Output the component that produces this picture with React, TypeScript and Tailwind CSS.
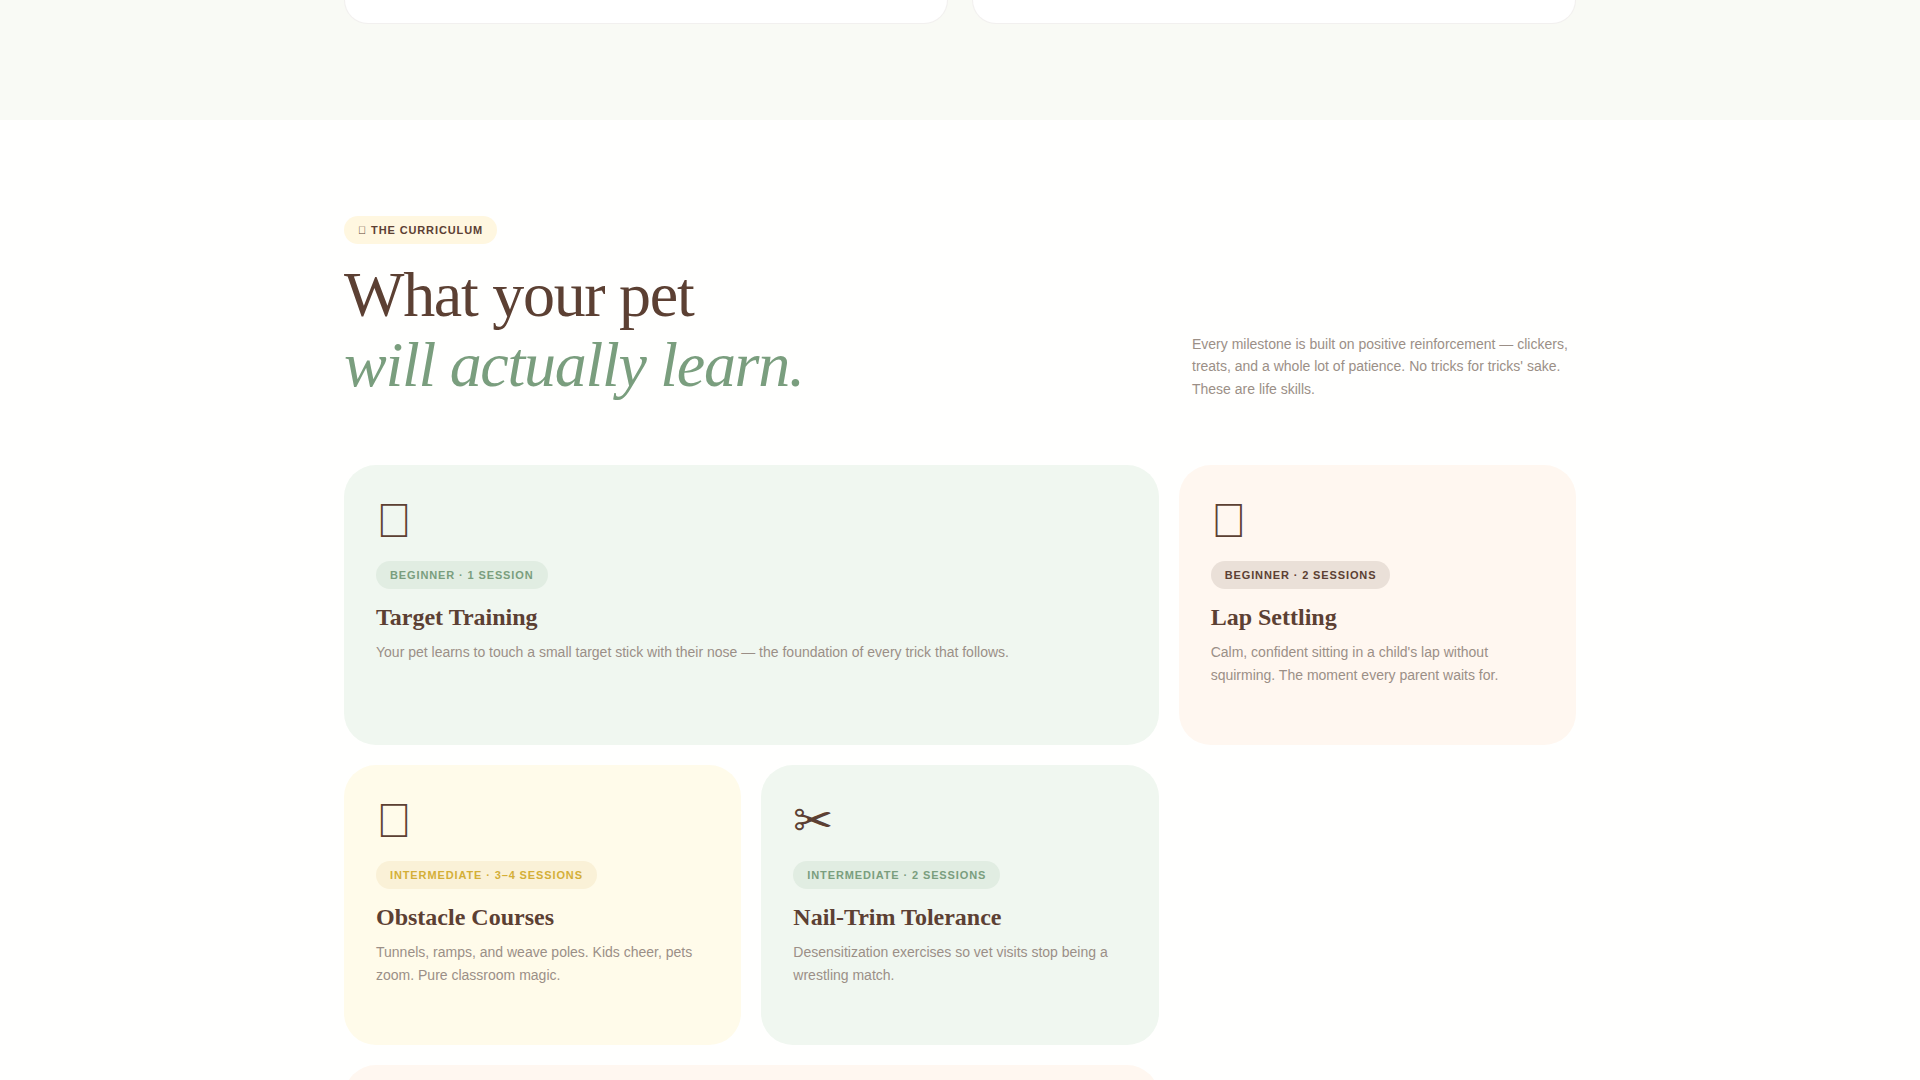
type Lesson = {
  icon: string;
  level: string;
  title: string;
  text: string;
  card: string;
  badge: string;
};

const GLYPH = '\uE000';

const lessons: Lesson[] = [
  {
    icon: GLYPH,
    level: 'Beginner · 1 session',
    title: 'Target Training',
    text: 'Your pet learns to touch a small target stick with their nose — the foundation of every trick that follows.',
    card: 'bg-[#f0f7f0] col-span-2',
    badge: 'bg-[#e1ede2] text-[#7a9e7e]',
  },
  {
    icon: GLYPH,
    level: 'Beginner · 2 sessions',
    title: 'Lap Settling',
    text: "Calm, confident sitting in a child's lap without squirming. The moment every parent waits for.",
    card: 'bg-[#fff7f0]',
    badge: 'bg-[#eae0d8] text-[#5c4033]',
  },
  {
    icon: GLYPH,
    level: 'Intermediate · 3–4 sessions',
    title: 'Obstacle Courses',
    text: 'Tunnels, ramps, and weave poles. Kids cheer, pets zoom. Pure classroom magic.',
    card: 'bg-[#fffbea]',
    badge: 'bg-[#faf1d7] text-[#d4af37]',
  },
  {
    icon: '✂',
    level: 'Intermediate · 2 sessions',
    title: 'Nail-Trim Tolerance',
    text: 'Desensitization exercises so vet visits stop being a wrestling match.',
    card: 'bg-[#f0f7f0]',
    badge: 'bg-[#e1ede2] text-[#7a9e7e]',
  },
];

const badgeBase =
  'inline-block rounded-full px-3.5 py-1.5 text-[11px] leading-4 font-bold uppercase tracking-[0.08em]';

function LessonCard({ lesson }: { lesson: Lesson }) {
  return (
    <article className={`min-h-[280px] rounded-[32px] p-8 ${lesson.card}`}>
      <div className="mb-4 h-12 text-5xl leading-none" aria-hidden="true">
        {lesson.icon}
      </div>
      <div className="mb-3 flex">
        <span className={`${badgeBase} ${lesson.badge}`}>{lesson.level}</span>
      </div>
      <h3 className="mb-2 font-['Liberation_Serif',serif] text-2xl font-bold">{lesson.title}</h3>
      <p className="text-sm leading-[23px] text-[#9b8f87]">{lesson.text}</p>
    </article>
  );
}

export default function App() {
  return (
    <div className="h-screen overflow-hidden bg-[#fffffe] font-['Liberation_Sans',sans-serif] text-[#5c4033]">
      <section className="bg-[#f9faf5] px-6 pb-24">
        <div className="mx-auto grid max-w-[1232px] grid-cols-2 gap-6">
          <div className="h-6 rounded-b-[24px] border border-t-0 border-[#5c4033]/8 bg-white" />
          <div className="h-6 rounded-b-[24px] border border-t-0 border-[#5c4033]/8 bg-white" />
        </div>
      </section>
      <section className="px-6 py-24">
        <div className="mx-auto max-w-[1232px]">
          <header className="mb-16 flex items-end justify-between">
            <div>
              <div className="mb-4 flex">
                <span className={`${badgeBase} bg-[#fff7e0]`}>
                  <span className="font-normal" aria-hidden="true">{GLYPH}</span> The Curriculum
                </span>
              </div>
              <h2 className="font-['Liberation_Serif',serif] text-[64px] leading-[1.1] tracking-[-0.02em]">
                What your pet
                <br />
                <em className="text-[#7a9e7e]">will actually learn.</em>
              </h2>
            </div>
            <p className="max-w-96 text-sm leading-relaxed text-[#9b8f87]">
              Every milestone is built on positive reinforcement — clickers, treats, and a whole lot of patience. No
              tricks for tricks' sake. These are life skills.
            </p>
          </header>
          <div className="grid grid-cols-3 gap-5">
            {lessons.map((lesson) => (
              <LessonCard key={lesson.title} lesson={lesson} />
            ))}
            <article className="col-span-2 col-start-1 min-h-[280px] rounded-[32px] bg-[#fff7f0]" />
          </div>
        </div>
      </section>
    </div>
  );
}
